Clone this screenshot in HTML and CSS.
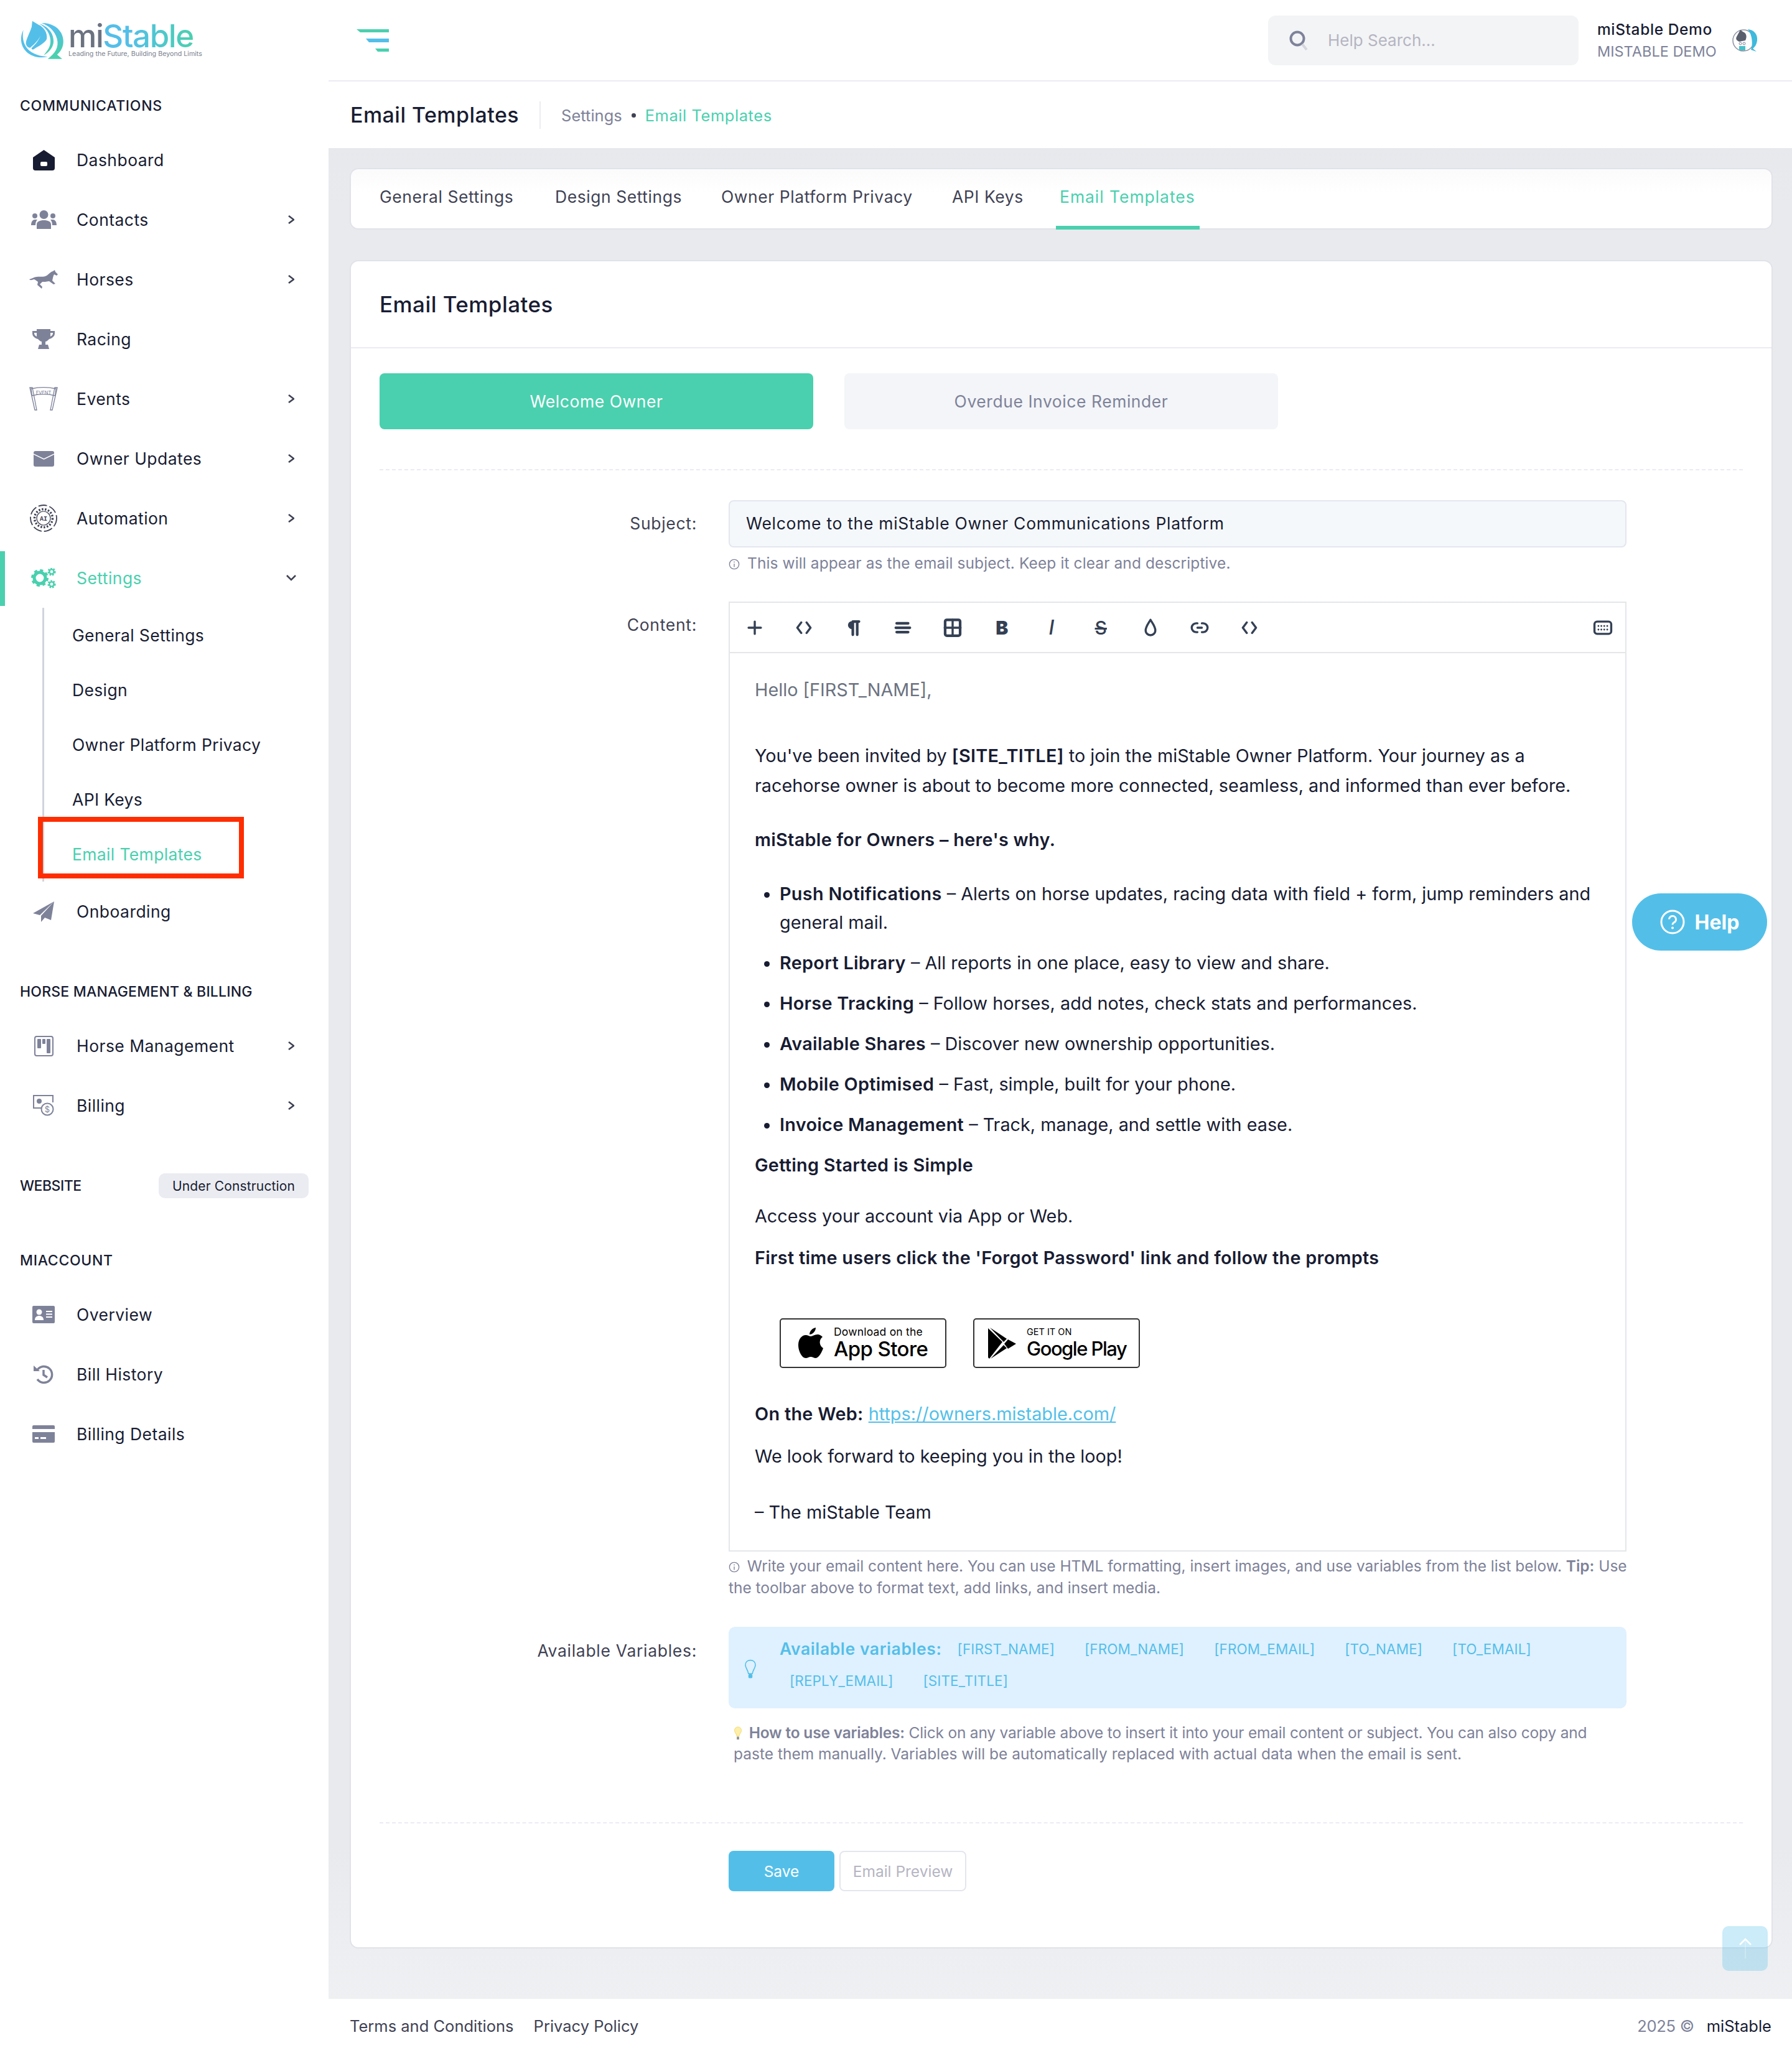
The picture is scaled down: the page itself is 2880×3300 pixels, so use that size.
FILE: index.html
```html
<!DOCTYPE html>
<html lang="en">
<head>
    <meta charset="UTF-8">
    <title>Email Templates</title>
    <link rel="stylesheet" href="styles.css">
</head>
<body>
<div class="page">

    <!-- Sidebar -->
    <aside class="sidebar">
        <div class="logo">
            <svg class="logo-mark" viewBox="35 40 220 190">
                <defs>
                    <linearGradient id="lg" x1="0.3" y1="0" x2="0.5" y2="1">
                        <stop offset="0.2" stop-color="#53bfe9"/>
                        <stop offset="0.9" stop-color="#4ad0ae"/>
                    </linearGradient>
                </defs>
                <path fill="#53bfe9" d="M52 85 C35 115 35 160 65 190 C90 215 130 225 170 215 C140 215 95 205 70 175 C50 150 45 115 52 85 Z"/>
                <path fill="url(#lg)" d="M140 52 C175 50 215 65 235 100 C255 140 245 180 215 205 L240 226 L170 226 C205 200 225 170 215 130 C205 90 175 65 140 52 Z"/>
                <path fill="url(#lg)" d="M130 56 C170 68 198 100 198 140 C198 165 180 192 150 208 C170 185 185 165 183 135 C180 100 160 75 130 56 Z"/>
                <path fill="#53bfe9" d="M95 42 L125 60 C150 70 170 100 165 130 C155 150 125 165 100 180 C92 182 88 176 95 170 C105 160 118 150 135 115 C120 140 105 155 85 172 C75 172 66 165 64 150 C65 130 85 95 92 70 Z"/>
            </svg>
            <div class="logo-text">
                <div class="logo-name"><span class="logo-mi">mi</span><span class="logo-stable">Stable</span></div>
                <div class="logo-tag">Leading the Future, Building Beyond Limits</div>
            </div>
        </div>

        <div class="section-title">COMMUNICATIONS</div>
        <ul class="menu">
            <li class="menu-item">
                <span class="menu-icon"><svg width="35" height="33" viewBox="0 0 35 33"><path fill="#181c32" d="M0 12 L17.5 0 L35 12 V29 a4 4 0 0 1-4 4 H4 a4 4 0 0 1-4-4 Z"/><rect x="12" y="19" width="11" height="7" rx="2" fill="#fff"/></svg></span>
                <span class="menu-text">Dashboard</span>
            </li>
            <li class="menu-item">
                <span class="menu-icon"><svg width="41" height="30" viewBox="0 0 41 30" fill="#7e8299"><circle cx="20.5" cy="7" r="7"/><path d="M9 30 V23 C9 18 14 16 20.5 16 S32 18 32 23 V30 Z"/><circle cx="6" cy="9" r="4"/><circle cx="35" cy="9" r="4"/><path d="M0 24 C0 18 3 15 6 15 H10 C8 17 7 20 7 24 Z M41 24 C41 18 38 15 35 15 H31 C33 17 34 20 34 24 Z"/></svg></span>
                <span class="menu-text">Contacts</span>
                <svg class="chev" viewBox="0 0 10 14"><path d="M1 1 L9 7 L1 13"/></svg>
            </li>
            <li class="menu-item">
                <span class="menu-icon"><svg width="46" height="30" viewBox="0 0 46 30" fill="#7e8299"><path d="M0 15 C4 14 8 11 12 11 C18 10 22 12 28 9 C31 7 34 3 38 2 L41 0 L42 3 L46 7 L44 9 L40 7 C38 10 38 14 37 17 L42 22 L39 23 L32 18 C27 19 24 19 21 19 L17 23 L21 27 L20 30 L13 24 L14 19 C11 17 9 15 7 15 C5 16 2 17 0 15 Z"/></svg></span>
                <span class="menu-text">Horses</span>
                <svg class="chev" viewBox="0 0 10 14"><path d="M1 1 L9 7 L1 13"/></svg>
            </li>
            <li class="menu-item">
                <span class="menu-icon"><svg width="36" height="32" viewBox="0 0 36 32" fill="#7e8299"><path d="M7 0 H29 V3 H36 V7 C36 12 31 15 27 16 C25 18 23 20 21 20 V25 H25 L27 32 H9 L11 25 H15 V20 C13 20 11 18 9 16 C5 15 0 12 0 7 V3 H7 Z M3 6 V7 C3 9 5 11 7 12 V6 Z M33 6 H29 V12 C31 11 33 9 33 7 Z" fill-rule="evenodd"/></svg></span>
                <span class="menu-text">Racing</span>
            </li>
            <li class="menu-item">
                <span class="menu-icon"><svg width="46" height="38" viewBox="0 0 46 38"><g fill="none" stroke="#7e8299" stroke-width="1.3"><path d="M1 1 L9 37 H12 L5 1 Z M45 1 L37 37 H34 L41 1 Z"/><path d="M3 3 C16 0 30 0 43 3 L41.5 14 C30 11 16 11 4.5 14 Z"/></g><text x="23" y="11.5" text-anchor="middle" class="event-text">EVENT</text></svg></span>
                <span class="menu-text">Events</span>
                <svg class="chev" viewBox="0 0 10 14"><path d="M1 1 L9 7 L1 13"/></svg>
            </li>
            <li class="menu-item">
                <span class="menu-icon"><svg width="33" height="25" viewBox="0 0 33 25"><rect width="33" height="25" rx="3" fill="#7e8299"/><path d="M0 5 L16.5 13 L33 5" fill="none" stroke="#fff" stroke-width="1.5"/></svg></span>
                <span class="menu-text">Owner Updates</span>
                <svg class="chev" viewBox="0 0 10 14"><path d="M1 1 L9 7 L1 13"/></svg>
            </li>
            <li class="menu-item">
                <span class="menu-icon"><svg width="46" height="44" viewBox="0 0 46 44"><g fill="none" stroke="#3f4254"><circle cx="23" cy="22" r="21" stroke-width="1.8" stroke-dasharray="14 4"/><circle cx="23" cy="22" r="14.5" stroke-width="3.5" stroke-dasharray="2.5 2.5"/><circle cx="23" cy="22" r="11" stroke-width="1.2"/></g><text x="23" y="25.5" text-anchor="middle" class="ai-text">AI</text></svg></span>
                <span class="menu-text">Automation</span>
                <svg class="chev" viewBox="0 0 10 14"><path d="M1 1 L9 7 L1 13"/></svg>
            </li>
            <li class="menu-item active">
                <span class="menu-icon"><svg width="41" height="33" viewBox="0 0 41 33"><g fill="none" stroke="#4ad0ae"><circle cx="14" cy="16" r="9" stroke-width="5"/><circle cx="14" cy="16" r="12" stroke-width="4" stroke-dasharray="5 4.4"/><circle cx="33" cy="6" r="3.6" stroke-width="2.4"/><circle cx="33" cy="6" r="5.4" stroke-width="2.4" stroke-dasharray="2.6 2"/><circle cx="33" cy="26" r="3.6" stroke-width="2.4"/><circle cx="33" cy="26" r="5.4" stroke-width="2.4" stroke-dasharray="2.6 2"/></g></svg></span>
                <span class="menu-text">Settings</span>
                <svg class="chev chev-down" viewBox="0 0 16 10"><path d="M1 1 L8 8 L15 1"/></svg>
            </li>
        </ul>
        <ul class="submenu">
            <li class="sub-item">General Settings</li>
            <li class="sub-item">Design</li>
            <li class="sub-item">Owner Platform Privacy</li>
            <li class="sub-item">API Keys</li>
            <li class="sub-item current">Email Templates</li>
        </ul>
        <ul class="menu">
            <li class="menu-item">
                <span class="menu-icon"><svg width="34" height="33" viewBox="0 0 34 33" fill="#7e8299"><path d="M34 0 L0 19 L11 22 Z M34 0 L13 23 V33 L19 26 L29 30 Z"/></svg></span>
                <span class="menu-text">Onboarding</span>
            </li>
        </ul>

        <div class="section-title spaced title-tight">HORSE MANAGEMENT &amp; BILLING</div>
        <ul class="menu">
            <li class="menu-item">
                <span class="menu-icon"><svg width="31" height="33" viewBox="0 0 31 33"><rect x="1" y="1" width="29" height="31" rx="3" fill="none" stroke="#7e8299" stroke-width="2"/><g fill="#7e8299"><rect x="5" y="5" width="6" height="15" rx="1"/><rect x="13" y="5" width="5" height="8" rx="1"/><rect x="20" y="5" width="6" height="23" rx="1"/></g></svg></span>
                <span class="menu-text">Horse Management</span>
                <svg class="chev" viewBox="0 0 10 14"><path d="M1 1 L9 7 L1 13"/></svg>
            </li>
            <li class="menu-item">
                <span class="menu-icon"><svg width="34" height="34" viewBox="0 0 34 34"><path d="M14 21 H1 V1 H32 V12" fill="none" stroke="#7e8299" stroke-width="2"/><circle cx="10" cy="10" r="4" fill="#7e8299"/><circle cx="23" cy="23" r="9.5" fill="#fff" stroke="#7e8299" stroke-width="2"/><text x="23" y="28" text-anchor="middle" class="dollar-text">$</text></svg></span>
                <span class="menu-text">Billing</span>
                <svg class="chev" viewBox="0 0 10 14"><path d="M1 1 L9 7 L1 13"/></svg>
            </li>
        </ul>

        <div class="section-title spaced website">
            <span class="website-name">WEBSITE</span>
            <span class="badge">Under Construction</span>
        </div>

        <div class="section-title spaced">MIACCOUNT</div>
        <ul class="menu">
            <li class="menu-item">
                <span class="menu-icon"><svg width="36" height="28" viewBox="0 0 36 28"><rect width="36" height="28" rx="2" fill="#7e8299"/><g fill="#fff"><circle cx="11" cy="10" r="4.5"/><path d="M4 23 C4 18 7 16 11 16 S18 18 18 23 Z"/><rect x="22" y="8" width="10" height="2"/><rect x="22" y="12.5" width="10" height="2"/><rect x="22" y="17" width="10" height="2"/></g></svg></span>
                <span class="menu-text">Overview</span>
            </li>
            <li class="menu-item">
                <span class="menu-icon"><svg width="32" height="32" viewBox="0 0 32 32"><path d="M6 9 A13 13 0 1 1 6 24" fill="none" stroke="#7e8299" stroke-width="3.5"/><path d="M0 2 L10 11 H0 Z" fill="#7e8299"/><path d="M16 9 V17 L22 21" fill="none" stroke="#7e8299" stroke-width="3.5"/></svg></span>
                <span class="menu-text">Bill History</span>
            </li>
            <li class="menu-item">
                <span class="menu-icon"><svg width="36" height="28" viewBox="0 0 36 28" fill="#7e8299"><path d="M0 2 a2 2 0 0 1 2-2 H34 a2 2 0 0 1 2 2 V6 H0 Z"/><path d="M0 11 H36 V26 a2 2 0 0 1-2 2 H2 a2 2 0 0 1-2-2 Z"/><rect x="4" y="19" width="6" height="3" fill="#fff"/><rect x="13" y="19" width="9" height="3" fill="#fff"/></svg></span>
                <span class="menu-text">Billing Details</span>
            </li>
        </ul>
    </aside>

    <div class="main">
        <!-- Top bar -->
        <header class="topbar">
            <svg class="toggle" viewBox="0 0 52 36"><path fill="#4ad0ae" d="M0 0 H52 V5 H6 Z"/><path fill="#53bfe9" d="M15 15 H52 V21 H20 Z"/><path fill="#4ad0ae" d="M30 31 H52 V36 H34 Z"/></svg>
            <div class="search">
                <svg width="30" height="32" viewBox="0 0 30 32"><circle cx="13" cy="13" r="10.5" fill="none" stroke="#7e8299" stroke-width="4"/><path d="M21 22 L28 31" stroke="#d5d6de" stroke-width="4"/></svg>
                <span class="search-text">Help Search...</span>
            </div>
            <div class="user">
                <div class="user-name">miStable Demo</div>
                <div class="user-org">MISTABLE DEMO</div>
            </div>
            <svg class="avatar" viewBox="0 0 44 36">
                <circle cx="21" cy="18" r="17" fill="none" stroke="#8f93a3" stroke-width="1.5"/>
                <path d="M28 0 C38 1 44 8 43 18 C42 25 39 29 36 31 L42 36 L33 33 C36 26 36 10 28 0 Z" fill="#3fb9dc"/>
                <path d="M16 1 L20 4 C26 6 27 12 24 18 L14 20 C10 18 8 16 10 12 Z" fill="#5a5f6e"/>
                <circle cx="16" cy="23" r="2" fill="none" stroke="#7e8299"/>
                <circle cx="22" cy="23" r="2" fill="none" stroke="#7e8299"/>
                <rect x="14" y="27" width="10" height="7" fill="#4abfc9"/>
            </svg>
        </header>

        <!-- Page title -->
        <div class="subheader">
            <h1 class="page-title">Email Templates</h1>
            <div class="crumbs">
                <span>Settings</span>
                <span class="crumb-dot"></span>
                <span class="crumb-current">Email Templates</span>
            </div>
        </div>

        <div class="content">
            <nav class="tabs">
                <span class="tab tab-general">General Settings</span>
                <span class="tab tab-design">Design Settings</span>
                <span class="tab tab-privacy">Owner Platform Privacy</span>
                <span class="tab tab-api">API Keys</span>
                <span class="tab tab-email">Email Templates</span>
            </nav>

            <section class="card">
                <h2 class="card-title">Email Templates</h2>
                <div class="card-body">
                    <div class="template-btns">
                        <div class="template-btn selected">Welcome Owner</div>
                        <div class="template-btn">Overdue Invoice Reminder</div>
                    </div>

                    <div class="form-row subject-row">
                        <label class="form-label">Subject:</label>
                        <div>
                            <div class="input">Welcome to the miStable Owner Communications Platform</div>
                            <div class="hint">
                                <svg class="info" viewBox="0 0 20 20"><circle cx="10" cy="10" r="8.5"/><path d="M10 9 V15 M10 5 V7"/></svg>
                                This will appear as the email subject. Keep it clear and descriptive.
                            </div>
                        </div>
                    </div>

                    <div class="form-row content-row">
                        <label class="form-label">Content:</label>
                        <div>
                            <div class="editor">
                                <div class="toolbar">
                                    <span class="tool"><svg viewBox="0 0 24 24"><path d="M12 5 V19 M5 12 H19"/></svg></span>
                                    <span class="tool"><svg viewBox="0 0 24 24"><path d="M9 6 L4.5 12 L9 18 M15 6 L19.5 12 L15 18"/></svg></span>
                                    <span class="tool"><svg viewBox="0 0 24 24"><path class="bold" d="M11 20 V5 M16 20 V5 M18 5 H11"/><path class="fill" d="M11 5 H10 A4 4 0 0 0 10 13 H11 Z"/></svg></span>
                                    <span class="tool"><svg viewBox="0 0 24 24"><path class="bold" d="M5 7 H18 M4 12 H20 M5 17 H18"/></svg></span>
                                    <span class="tool"><svg viewBox="0 0 24 24"><rect class="bold" x="3.5" y="3" width="17" height="18" rx="2"/><path d="M12 3 V21 M3 12 H21"/></svg></span>
                                    <span class="tool tool-glyph"><b>B</b></span>
                                    <span class="tool tool-glyph tool-italic"><i>I</i></span>
                                    <span class="tool tool-glyph tool-strike"><s>S</s></span>
                                    <span class="tool"><svg viewBox="0 0 24 24"><path d="M12 3 C15 8 17.5 11 17.5 15 A5.5 5.5 0 0 1 6.5 15 C6.5 11 9 8 12 3 Z"/></svg></span>
                                    <span class="tool"><svg viewBox="0 0 24 24"><path d="M9.5 7 H8 A5 5 0 0 0 8 17 H9.5 M14.5 7 H16 A5 5 0 0 1 16 17 H14.5 M9.5 12 H14.5"/></svg></span>
                                    <span class="tool"><svg viewBox="0 0 24 24"><path d="M9 6 L4.5 12 L9 18 M15 6 L19.5 12 L15 18"/></svg></span>
                                    <span class="tool tool-keyboard"><svg viewBox="0 0 24 24"><rect x="2.5" y="5" width="19" height="14" rx="3"/><path class="thin" d="M7 10 V10.1 M10.3 10 V10.1 M13.6 10 V10.1 M17 10 V10.1 M7 14 V14.1 M10.3 14 V14.1 M13.6 14 V14.1 M17 14 V14.1"/></svg></span>
                                </div>
                                <div class="editor-body">
                                    <p class="muted">Hello [FIRST_NAME],</p>
                                    <p class="mt-58">You've been invited by <b>[SITE_TITLE]</b> to join the miStable Owner Platform. Your journey as a racehorse owner is about to become more connected, seamless, and informed than ever before.</p>
                                    <p class="mt-39"><b>miStable for Owners – here's why.</b></p>
                                    <ul class="perks">
                                        <li><b>Push Notifications</b> – Alerts on horse updates, racing data with field + form, jump reminders and general mail.</li>
                                        <li><b>Report Library</b> – All reports in one place, easy to view and share.</li>
                                        <li><b>Horse Tracking</b> – Follow horses, add notes, check stats and performances.</li>
                                        <li><b>Available Shares</b> – Discover new ownership opportunities.</li>
                                        <li><b>Mobile Optimised</b> – Fast, simple, built for your phone.</li>
                                        <li><b>Invoice Management</b> – Track, manage, and settle with ease.</li>
                                    </ul>
                                    <p class="mt-18"><b>Getting Started is Simple</b></p>
                                    <p class="mt-34">Access your account via App or Web.</p>
                                    <p class="mt-19"><b>First time users click the 'Forgot Password' link and follow the prompts</b></p>
                                    <div class="stores">
                                        <div class="store">
                                            <svg class="store-icon" width="40" height="50" viewBox="0 0 40 50"><path d="M28 0 C28 6 23 11 18 11 C18 5 23 1 28 0 Z"/><path d="M20 14 C23 14 26 11 31 11 C34 11 37 13 39 15 C33 19 33 29 40 33 C38 39 33 49 28 49 C25 49 23 47 20 47 C17 47 15 49 12 49 C6 49 0 38 0 28 C0 18 6 12 12 12 C15 12 18 14 20 14 Z"/></svg>
                                            <div>
                                                <div class="store-small">Download on the</div>
                                                <div class="store-big">App Store</div>
                                            </div>
                                        </div>
                                        <div class="store store-play">
                                            <svg class="store-icon" width="46" height="50" viewBox="0 0 46 50"><path d="M0 1 L23 23 L2 50 L0 48 Z"/><path d="M3 0 L30 18 L25 23 Z"/><path d="M32 19 L45 26 L32 34 L26 26 Z"/><path d="M4 50 L25 28 L30 33 Z"/></svg>
                                            <div>
                                                <div class="store-small">GET IT ON</div>
                                                <div class="store-big">Google Play</div>
                                            </div>
                                        </div>
                                    </div>
                                    <p class="mt-50"><b>On the Web:</b> <a class="web-link">https://owners.mistable.com/</a></p>
                                    <p class="mt-20">We look forward to keeping you in the loop!</p>
                                    <p class="mt-42">– The miStable Team</p>
                                </div>
                            </div>
                            <div class="hint hint-long">
                                <svg class="info" viewBox="0 0 20 20"><circle cx="10" cy="10" r="8.5"/><path d="M10 9 V15 M10 5 V7"/></svg>
                                Write your email content here. You can use HTML formatting, insert images, and use variables from the list below. <b>Tip:</b> Use<br>the toolbar above to format text, add links, and insert media.
                            </div>
                        </div>
                    </div>

                    <div class="form-row vars-row">
                        <label class="form-label">Available Variables:</label>
                        <div>
                            <div class="vars-box">
                                <svg class="bulb" viewBox="0 0 24 40"><path d="M12 2 C5 2 2 7 2 12 C2 18 7 21 8 29 H16 C17 21 22 18 22 12 C22 7 19 2 12 2 Z" fill="none" stroke="#53bfe9" stroke-width="2"/><rect x="8" y="30" width="8" height="8" rx="2" fill="#53bfe9"/></svg>
                                <div class="vars-list">
                                    <div class="vars-line">
                                        <b class="vars-title">Available variables:</b>
                                        <span class="var">[FIRST_NAME]</span>
                                        <span class="var">[FROM_NAME]</span>
                                        <span class="var">[FROM_EMAIL]</span>
                                        <span class="var">[TO_NAME]</span>
                                        <span class="var">[TO_EMAIL]</span>
                                    </div>
                                    <div class="vars-line second">
                                        <span class="var">[REPLY_EMAIL]</span>
                                        <span class="var">[SITE_TITLE]</span>
                                    </div>
                                </div>
                            </div>
                            <div class="how-to">
                                <div class="how-first">
                                    <svg class="how-bulb" viewBox="0 0 14 24"><path d="M7 1 C3 1 1 4 1 7 C1 11 4 12 5 17 H9 C10 12 13 11 13 7 C13 4 11 1 7 1 Z" fill="#fdeea8" stroke="#f3d66b"/><rect x="5" y="18" width="4" height="5" fill="#8f8f8f"/></svg>
                                    <b>How to use variables:</b> Click on any variable above to insert it into your email content or subject. You can also copy and
                                </div>
                                <div>paste them manually. Variables will be automatically replaced with actual data when the email is sent.</div>
                            </div>
                        </div>
                    </div>

                    <div class="form-row actions-row">
                        <div></div>
                        <div class="actions">
                            <div class="btn btn-save">Save</div>
                            <div class="btn btn-preview">Email Preview</div>
                        </div>
                    </div>
                </div>
            </section>
        </div>

        <footer class="footer">
            <span class="footer-link">Terms and Conditions</span>
            <span class="footer-link">Privacy Policy</span>
            <span class="copyright">2025 ©</span>
            <span class="brand">miStable</span>
        </footer>
    </div>
</div>

<!-- Floating buttons -->
<div class="help-btn">
    <svg width="40" height="40" viewBox="0 0 40 40"><circle cx="20" cy="20" r="18" fill="none" stroke="#fff" stroke-width="3"/><path d="M14.5 15.5 A5.5 5.5 0 1 1 22 21 C20.5 21.8 20 22.5 20 24.5" fill="none" stroke="#fff" stroke-width="3"/><circle cx="20" cy="29.5" r="2" fill="#fff"/></svg>
    <span>Help</span>
</div>
<div class="scroll-top">
    <svg width="24" height="36" viewBox="0 0 24 36"><path d="M3 12 L12 3 L21 12" fill="none" stroke="#fff" stroke-width="2.5"/><path d="M12 4 V34" stroke="#fff" stroke-opacity=".3" stroke-width="1.5"/></svg>
</div>

</body>
</html>
```

FILE: styles.css
```css
*, *::before, *::after {
    box-sizing: border-box;
}

html, body {
    margin: 0;
    padding: 0;
}

body {
    font-family: Inter, "Liberation Sans", sans-serif;
    font-size: 26px;
    color: #181c32;
    background-color: #fff;
}

ul {
    list-style: none;
    margin: 0;
    padding: 0;
}

p, h1, h2 {
    margin: 0;
}

.page {
    display: flex;
    height: 3300px;
    overflow: hidden;
}

/* Sidebar */
.sidebar {
    width: 528px;
    flex: none;
    background-color: #fff;
}

.logo {
    display: flex;
    height: 131px;
    padding: 33px 0 0 32px;
}

.logo-mark {
    width: 73px;
    height: 63px;
}

.logo-text {
    margin-left: 5px;
    padding-top: 4px;
}

.logo-name {
    font-size: 51px;
    font-weight: 500;
    line-height: 42px;
    letter-spacing: -1.4px;
}

.logo-mi {
    color: #6b7280;
}

.logo-stable {
    background: linear-gradient(90deg, #53bfe9 30%, #4ad0ae 100%);
    -webkit-background-clip: text;
    background-clip: text;
    color: transparent;
}

.logo-tag {
    font-size: 10.7px;
    line-height: 14px;
    color: #7a808c;
    white-space: nowrap;
    margin-top: 1px;
}

.section-title {
    height: 78px;
    padding: 0 32px;
    display: flex;
    align-items: center;
    font-size: 23px;
    font-weight: 500;
    letter-spacing: 0.7px;
}

.section-title.spaced {
    margin-top: 42px;
}

.title-tight {
    letter-spacing: 0.2px;
}

.website {
    justify-content: space-between;
}

.website-name {
    letter-spacing: -0.5px;
}

.badge {
    height: 40px;
    width: 241px;
    display: flex;
    align-items: center;
    justify-content: center;
    background-color: #ebecf1;
    border-radius: 10px;
    font-size: 21px;
    font-weight: 400;
    letter-spacing: 0.15px;
}

.menu-item {
    position: relative;
    display: flex;
    align-items: center;
    height: 96px;
    padding-left: 46px;
    padding-right: 55px;
}

.menu-icon {
    width: 48px;
    display: flex;
    align-items: center;
    justify-content: center;
    margin-right: 29px;
}

.menu-text {
    flex: 1;
    font-size: 26.5px;
    letter-spacing: 0.45px;
}

.chev {
    width: 10px;
    height: 14px;
    fill: none;
    stroke: #3f4254;
    stroke-width: 2.6;
}

.chev-down {
    width: 16px;
    height: 10px;
    margin-right: -3px;
}

.active .menu-text {
    color: #4ad0ae;
}

/* active marker on the left edge */
.active::before {
    content: "";
    position: absolute;
    left: 0;
    top: 5px;
    width: 8px;
    height: 88px;
    background-color: #4ad0ae;
}

.submenu {
    margin-left: 68px;
    border-left: 3px solid #d0d4dd;
}

.sub-item {
    position: relative;
    display: flex;
    align-items: center;
    height: 88px;
    padding-left: 45px;
    font-size: 26.5px;
    letter-spacing: 0.35px;
}

.sub-item.current {
    color: #4ad0ae;
}

/* red annotation box from the screenshot */
.sub-item.current::after {
    content: "";
    position: absolute;
    left: -10px;
    top: -16px;
    width: 331px;
    height: 99px;
    border: 8px solid #ff2d00;
}

.event-text {
    font-family: Inter, sans-serif;
    font-size: 7.5px;
    fill: #7e8299;
}

.ai-text {
    font-family: "Liberation Mono", monospace;
    font-size: 10px;
    font-weight: 700;
    fill: #3f4254;
}

.dollar-text {
    font-family: Inter, sans-serif;
    font-size: 13px;
    fill: #7e8299;
}

/* Main column */
.main {
    flex: 1;
    min-width: 0;
    display: flex;
    flex-direction: column;
    background: linear-gradient(180deg, #e4e5ea 0, #e9eaee 10%, #e9eaee 90%, #f1f2f4 100%);
}

.topbar {
    height: 131px;
    flex: none;
    display: flex;
    align-items: center;
    background-color: #fff;
    border-bottom: 2px solid #ebebf3;
    padding: 0 55px 0 45px;
}

.toggle {
    width: 52px;
    height: 36px;
    margin-right: auto;
}

.search {
    width: 499px;
    height: 80px;
    display: flex;
    align-items: center;
    background-color: #f3f4f5;
    border-radius: 12px;
    padding-left: 34px;
}

.search-text {
    margin-left: 32px;
    color: #b5b5c3;
    font-size: 26px;
}

.user {
    margin-left: 30px;
    width: 214px;
}

.user-name {
    font-size: 24.5px;
    font-weight: 500;
    line-height: 36px;
    letter-spacing: 0.6px;
}

.user-org {
    font-size: 23.5px;
    line-height: 36px;
    color: #7e8299;
}

.avatar {
    width: 44px;
    height: 36px;
}

.subheader {
    height: 107px;
    flex: none;
    display: flex;
    align-items: center;
    background-color: #fff;
    padding-left: 35px;
}

.page-title {
    font-size: 34px;
    font-weight: 500;
    letter-spacing: 0.45px;
    padding-right: 33px;
    height: 44px;
    line-height: 44px;
    border-right: 2px solid #ebebf3;
}

.crumbs {
    display: flex;
    align-items: center;
    margin-left: 33px;
    padding-top: 2px;
    font-size: 25.5px;
    color: #7e8299;
}

.crumb-dot {
    width: 7px;
    height: 7px;
    border-radius: 50%;
    background-color: #3f4254;
    margin: 0 15px;
}

.crumb-current {
    color: #4ad0ae;
    letter-spacing: 0.55px;
}

.content {
    flex: 1;
    padding: 34px 33px 0 36px;
}

.tabs {
    height: 95px;
    display: flex;
    background: linear-gradient(180deg, #fbfbfc, #fff 40%);
    border-radius: 12px;
    box-shadow: 0 0 0 2px #e1e3ea;
    padding-left: 46px;
}

.tab {
    height: 97px;
    padding-top: 28px;
    font-size: 26.5px;
    letter-spacing: 0.55px;
    color: #3f4254;
    white-space: nowrap;
}

.tab-general {
    width: 282px;
}

.tab-design {
    width: 267px;
}

.tab-privacy {
    width: 371px;
}

.tab-api {
    width: 167px;
}

.tab-email {
    width: 231px;
    padding-left: 6px;
    color: #4ad0ae;
    letter-spacing: 0.95px;
    border-bottom: 6px solid #4ad0ae;
}

.card {
    margin-top: 53px;
    height: 2710px;
    background-color: #fff;
    border-radius: 12px;
    box-shadow: 0 0 0 2px #e1e3ea;
}

.card-title {
    height: 140px;
    display: flex;
    align-items: center;
    padding-left: 46px;
    font-size: 35px;
    font-weight: 500;
    letter-spacing: 0.45px;
    border-bottom: 2px solid #ebebf3;
}

.card-body {
    padding: 40px 46px 0;
}

.template-btns {
    display: flex;
    gap: 50px;
    height: 156px;
    border-bottom: 2px dashed #ebebf3;
}

.template-btn {
    width: 697px;
    height: 90px;
    display: flex;
    align-items: center;
    justify-content: center;
    border-radius: 8px;
    background-color: #f3f5f8;
    color: #7e8299;
    font-size: 26.5px;
    letter-spacing: 0.55px;
}

.template-btn.selected {
    background-color: #4ad0ae;
    color: #fff;
}

.form-row {
    display: grid;
    grid-template-columns: 510px 1443px;
    column-gap: 51px;
}

.form-label {
    text-align: right;
    font-size: 26.5px;
    letter-spacing: 0.7px;
    color: #3f4254;
}

.subject-row {
    margin-top: 48px;
}

.subject-row .form-label {
    padding-top: 21px;
}

.input {
    height: 76px;
    display: flex;
    align-items: center;
    padding: 0 0 2px 26px;
    background-color: #f5f8fb;
    border: 2px solid #e4e6ef;
    border-radius: 8px;
    font-size: 26.5px;
    letter-spacing: 0.7px;
}

.hint {
    margin-top: 8px;
    font-size: 24.5px;
    line-height: 34px;
    letter-spacing: 0.1px;
    color: #7e8299;
}

.info {
    width: 18px;
    height: 18px;
    vertical-align: -2px;
    margin-right: 5px;
    fill: none;
    stroke: #7e8299;
    stroke-width: 1.5;
}

.content-row {
    margin-top: 45px;
}

.content-row .form-label {
    padding-top: 21px;
}

.editor {
    border: 2px solid #e4e6e9;
}

.toolbar {
    height: 81px;
    display: flex;
    align-items: center;
    border-bottom: 2px solid #e4e6e9;
}

.tool {
    width: 79.5px;
    display: flex;
    justify-content: center;
    color: #344054;
}

.tool svg {
    width: 34px;
    height: 34px;
    fill: none;
    stroke: #344054;
    stroke-width: 2.4;
    stroke-linecap: round;
    stroke-linejoin: round;
}

.tool svg .bold {
    stroke-width: 3;
}

.tool svg .fill {
    fill: #344054;
    stroke-width: 1;
}

.tool svg .thin {
    stroke-width: 2;
}

.tool-glyph {
    font-size: 30px;
    line-height: 34px;
    font-weight: 700;
}

.tool-italic {
    font-size: 32px;
    font-weight: 500;
}

.tool-strike {
    font-weight: 500;
}

.tool-keyboard {
    width: auto;
    margin-left: auto;
    margin-right: 19px;
}

.editor-body {
    padding: 35px 40px 37px;
    font-size: 28.8px;
    line-height: 48px;
}

.editor-body b {
    font-weight: 600;
    letter-spacing: 0.3px;
}

.muted {
    color: #6b7280;
}

.mt-58 { margin-top: 58px; }
.mt-50 { margin-top: 50px; }
.mt-42 { margin-top: 42px; }
.mt-39 { margin-top: 39px; }
.mt-34 { margin-top: 34px; }
.mt-20 { margin-top: 20px; }
.mt-19 { margin-top: 19px; }
.mt-18 { margin-top: 18px; }

.perks {
    margin-top: 40px;
    padding-left: 40px;
    line-height: 46px;
    list-style: disc;
}

.perks li + li {
    margin-top: 19px;
}

.stores {
    display: flex;
    gap: 43px;
    margin: 73px 0 0 40px;
}

.store {
    width: 268px;
    height: 80px;
    display: flex;
    align-items: center;
    border: 2px solid #333;
    border-radius: 5px;
    padding-left: 28px;
    color: #000;
}

.store-icon {
    flex: none;
    margin-right: 17px;
}

.store-small {
    font-size: 17.5px;
    line-height: 18px;
    letter-spacing: 0.2px;
    white-space: nowrap;
}

.store-big {
    font-size: 33px;
    line-height: 36px;
    font-weight: 500;
    letter-spacing: -0.6px;
    white-space: nowrap;
}

.store-play {
    padding-left: 22px;
}

.store-play .store-icon {
    margin-right: 16px;
}

.store-play .store-small {
    font-size: 14.5px;
    letter-spacing: 0;
}

.store-play .store-big {
    font-size: 31px;
    letter-spacing: -1.5px;
}

.web-link {
    color: #53bfe9;
    text-decoration: underline;
}

.hint-long {
    margin-top: 6px;
    line-height: 35px;
    letter-spacing: -0.03px;
    white-space: nowrap;
}

.hint-long b {
    font-weight: 600;
}

.vars-row {
    margin-top: 45px;
}

.vars-row .form-label {
    padding-top: 22px;
}

.vars-box {
    height: 131px;
    display: flex;
    align-items: center;
    background-color: #dff0ff;
    border-radius: 10px;
    padding-left: 23px;
    color: #53bfe9;
}

.bulb {
    width: 24px;
    height: 32px;
    flex: none;
    margin-right: 35px;
    margin-top: 4px;
}

.vars-list {
    flex: 1;
    padding-bottom: 10px;
}

.vars-line {
    display: flex;
    align-items: center;
    height: 51px;
}

.vars-line.second {
    padding-left: 16px;
}

.vars-title {
    font-size: 26.5px;
    font-weight: 600;
    letter-spacing: 0.6px;
    white-space: nowrap;
}

.var {
    font-size: 22.5px;
    letter-spacing: 0.1px;
    margin-left: 48px;
    white-space: nowrap;
}

.vars-title + .var {
    margin-left: 25px;
}

.var:first-child {
    margin-left: 0;
}

.how-to {
    margin-top: 22px;
    padding-left: 8px;
    font-size: 24.5px;
    line-height: 34px;
    color: #7e8299;
    white-space: nowrap;
}

.how-first {
    letter-spacing: -0.2px;
}

.how-to b {
    font-weight: 600;
}

.how-bulb {
    width: 14px;
    height: 22px;
    vertical-align: -3px;
    margin-right: 4px;
}

.actions-row {
    margin-top: 93px;
    border-top: 2px dashed #ebebf3;
    padding-top: 44px;
}

.actions {
    display: flex;
    gap: 8px;
}

.btn {
    height: 65px;
    display: flex;
    align-items: center;
    justify-content: center;
    border-radius: 8px;
    font-size: 24.5px;
}

.btn-save {
    width: 170px;
    background-color: #53bfe9;
    color: #fff;
}

.btn-preview {
    width: 204px;
    border: 2px solid #e4e6ef;
    color: #b5b5c3;
}

.footer {
    height: 87px;
    flex: none;
    display: flex;
    align-items: center;
    background-color: #fff;
    padding: 0 33px 0 34px;
    font-size: 25.5px;
}

.footer-link {
    color: #3f4254;
    margin-right: 32px;
}

.copyright {
    margin-left: auto;
    color: #7e8299;
    letter-spacing: -0.3px;
}

.brand {
    margin-left: 20px;
}

/* Floating buttons */
.help-btn {
    position: fixed;
    top: 1436px;
    right: 40px;
    width: 217px;
    height: 92px;
    display: flex;
    align-items: center;
    justify-content: center;
    gap: 16px;
    border-radius: 46px;
    background-color: #53bfe9;
    color: #fff;
    font-size: 32px;
    font-weight: 700;
}

.scroll-top {
    position: fixed;
    top: 3096px;
    right: 39px;
    width: 73px;
    height: 72px;
    display: flex;
    align-items: center;
    justify-content: center;
    border-radius: 10px;
    background-color: rgba(83, 191, 233, 0.3);
}
```
